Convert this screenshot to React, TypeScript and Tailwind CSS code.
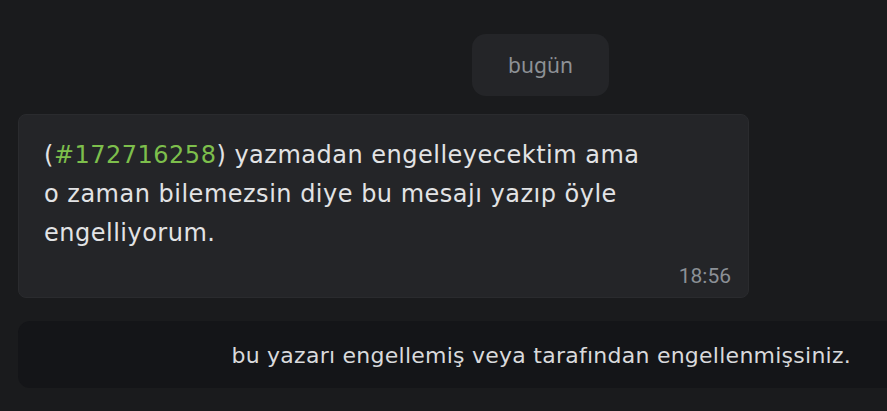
export default function App() {
  return (
    <div className="h-[411px] w-[887px] overflow-hidden bg-[#1a1b1d] pl-[18px] pt-[34px] flex flex-col">
      <div className="ml-[454px] flex h-[62px] w-[137px] items-center justify-center rounded-[14px] bg-[#242528]">
        <span className="text-[21px] text-[#8d9196] font-['Noto_Sans',sans-serif] leading-none">bugün</span>
      </div>

      <div className="mt-[18px] flex h-[184px] w-[731px] flex-col rounded-[8px] border border-[#2a2b2e] bg-[#242528] pl-[25px] pr-[17px] pt-[21px] pb-[10px] font-['DejaVu_Sans',sans-serif]">
        <p className="text-[24px] leading-[39px] text-[#e2e3e5] tracking-[0.5px]">
          (<span className="text-[#7dbf4c]">#172716258</span>) yazmadan engelleyecektim ama
          <br />o zaman bilemezsin diye bu mesajı yazıp öyle
          <br />engelliyorum.
        </p>
        <div className="mt-auto flex justify-end">
          <span className="text-[21px] leading-none text-[#8b9096] font-['Roboto',sans-serif]">18:56</span>
        </div>
      </div>

      <div className="mt-[23px] -mr-[20px] flex h-[67px] items-center justify-end rounded-[12px] bg-[#141518] pr-[56px] pt-[3px]">
        <span className="text-[22px] leading-none text-[#d9dadc] font-['DejaVu_Sans',sans-serif] tracking-[0.25px]">
          bu yazarı engellemiş veya tarafından engellenmişsiniz.
        </span>
      </div>
    </div>
  )
}
